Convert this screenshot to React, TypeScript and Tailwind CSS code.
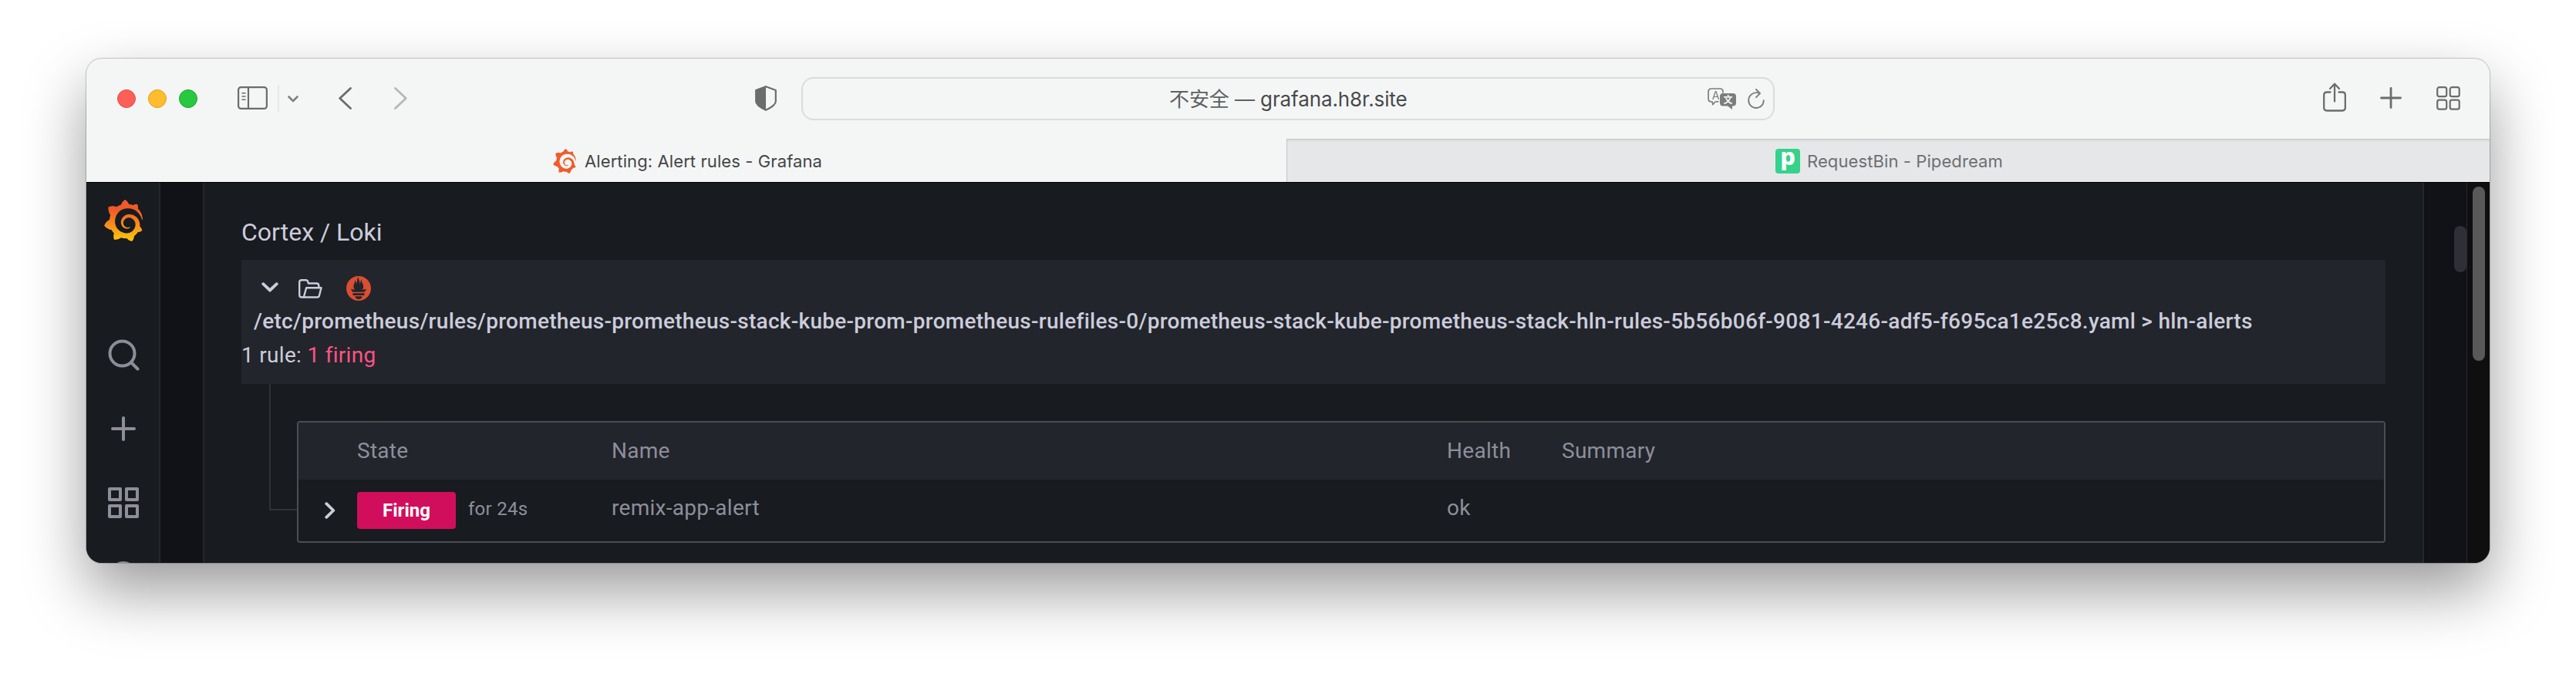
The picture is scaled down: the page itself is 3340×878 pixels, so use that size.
import React from "react";
import { SiGrafana, SiPrometheus } from "react-icons/si";

function Toolbar() {
  return (
    <div className="flex h-[104px] shrink-0 items-center text-[#6b6c6c]">
      <div className="ml-[40px] flex gap-4">
        <div className="size-6 rounded-full border border-[#e24b41] bg-[#ff5f57]" />
        <div className="size-6 rounded-full border border-[#e1a116] bg-[#febc2e]" />
        <div className="size-6 rounded-full border border-[#12ac28] bg-[#28c840]" />
      </div>
      <svg className="ml-[52px] h-[30px] w-[39px] -translate-y-px" viewBox="0 0 39 30" fill="none" stroke="currentColor" strokeWidth="2.2" strokeLinecap="round">
        <rect x="1.1" y="1.1" width="36.800" height="27.800" rx="3.500" />
        <path d="M14 1v28" />
        <path d="M6 8.700h4M6 13h4M6 17.300h4" strokeWidth="1.600" />
      </svg>
      <div className="ml-[13px] h-9 w-[2px] bg-[#e6e7e7]" />
      <svg className="ml-[11px] h-[9px] w-[14px]" viewBox="0 0 14 9" fill="none" stroke="#7f8085" strokeWidth="2.600" strokeLinecap="round" strokeLinejoin="round">
        <path d="M1.500 1.500 7 7l5.500-5.500" />
      </svg>
      <svg className="ml-[52px] h-[29px] w-[17px] -translate-y-px" viewBox="0 0 17 29" fill="none" stroke="currentColor" strokeWidth="2.800" strokeLinecap="round" strokeLinejoin="round">
        <path d="M15.500 1.500 1.700 14.500l13.800 13" />
      </svg>
      <svg className="ml-[55px] h-[29px] w-[17px] -translate-y-px" viewBox="0 0 17 29" fill="none" stroke="#b6b7b7" strokeWidth="2.800" strokeLinecap="round" strokeLinejoin="round">
        <path d="M1.500 1.500 15.300 14.500 1.500 27.500" />
      </svg>
      <svg className="ml-[451px] h-[33px] w-[28px] -translate-y-px" viewBox="0 0 28 33" fill="none">
        <path d="M14 1.200 26.800 6v14.500c0 3.200-5.300 7.700-12.800 11.200C6.500 28.200 1.200 23.700 1.200 20.500V6z" stroke="currentColor" strokeWidth="2.200" strokeLinejoin="round" />
        <path d="M14 1.200v30.500C6.500 28.200 1.200 23.700 1.200 20.500V6z" fill="currentColor" />
      </svg>
      <div className="ml-[32px] flex h-14 w-[1262px] items-center rounded-2xl border-2 border-[#dadbdb] pr-[11px]">
        <div className="ml-[475px] flex-1 pt-[2px] font-['Inter','Noto_Sans_CJK_SC',sans-serif] text-[26px] leading-8 tracking-[-0.1px] whitespace-nowrap text-[#484949]">
          <span className="text-[#5f6060]">不安全 — </span>
          <span>grafana.h8r.site</span>
        </div>
        <svg className="h-[28px] w-[38px]" viewBox="0 0 38 28" fill="none">
          <path d="M14.500 17.700 10 18l-3.300 3.700L6.200 18H5c-2.600 0-4-1.400-4-4V5c0-2.600 1.400-4 4-4h11c2.600 0 4 1.400 4 4v1.500" stroke="#7b7c7c" strokeWidth="1.700" strokeLinejoin="round" />
          <text x="10.500" y="14.500" textAnchor="middle" fontFamily="Inter" fontSize="14" fill="#7b7c7c">A</text>
          <path d="M20 7h13c2.600 0 4 1.400 4 4v8.500c0 2.600-1.400 4-4 4h-1V28l-6-4.500h-6c-2.600 0-4-1.400-4-4V11c0-2.600 1.400-4 4-4z" fill="#7b7c7c" />
          <text x="26.500" y="19.500" textAnchor="middle" fontFamily="Noto Sans CJK SC" fontWeight="700" fontSize="12" fill="#f4f6f6">文</text>
        </svg>
        <svg className="ml-[14px] h-[26px] w-[22px]" viewBox="0 0 22 26" fill="none" stroke="#7b7c7c" strokeWidth="1.900" strokeLinecap="round" strokeLinejoin="round">
          <path d="M15.500 5.900C9 3.500 1.200 7.500 1.200 15.200a9.700 9.700 0 0 0 19.600 0" />
          <path d="M11 1l5 5.200-5 5" />
        </svg>
      </div>
      <svg className="ml-auto h-[38px] w-[30px] -translate-y-[2px]" viewBox="0 0 30 38" fill="none" stroke="currentColor" strokeWidth="2.300" strokeLinecap="round" strokeLinejoin="round">
        <path d="M9.500 12.500H5c-2.500 0-3.800 1.400-3.800 3.900v16.200c0 2.500 1.300 3.900 3.800 3.900h20c2.500 0 3.800-1.400 3.800-3.900V16.400c0-2.500-1.300-3.900-3.800-3.900h-4.500" />
        <path d="M15 24.500V2M9 8l6-6.300L21 8" />
      </svg>
      <svg className="ml-[44px] size-[28px] -translate-y-px" viewBox="0 0 28 28" stroke="currentColor" strokeWidth="2.800" strokeLinecap="round">
        <path d="M14 1.500v25M1.500 14h25" />
      </svg>
      <svg className="mr-[38px] ml-[45px] h-[31px] w-[31px] -translate-y-px" viewBox="0 0 31 31" fill="none" stroke="currentColor" strokeWidth="2.200">
        <rect x="1.200" y="1.200" width="12" height="12" rx="2.500" />
        <rect x="17.700" y="1.200" width="12" height="12" rx="2.500" />
        <rect x="1.200" y="17.700" width="12" height="12" rx="2.500" />
        <rect x="17.700" y="17.700" width="12" height="12" rx="2.500" />
      </svg>
    </div>
  );
}

function TabBar() {
  return (
    <div className="flex h-14 shrink-0 font-['Inter',sans-serif] text-[22px]">
      <div className="flex w-[1556px] items-center pt-[2px] pl-[604px] text-[#454646]">
        <SiGrafana className="size-8 text-[#f15b2a]" />
        <span className="ml-[10px] tracking-[0.1px] whitespace-nowrap">Alerting: Alert rules - Grafana</span>
      </div>
      <div className="flex flex-1 items-center border-t border-l border-[#c4c5c6] bg-[#e6e7e9] pt-px pl-[633px] text-[#6e6f71] shadow-[inset_0_3px_3px_-1px_rgba(0,0,0,0.06)]">
        <span className="flex size-8 items-center justify-center rounded-[4px] bg-[#34d28b] pb-[13px] font-['Noto_Sans',sans-serif] text-[31px] leading-none font-extrabold text-white">p</span>
        <span className="ml-[9px] tracking-[0.1px] whitespace-nowrap">RequestBin - Pipedream</span>
      </div>
    </div>
  );
}

function Sidebar() {
  return (
    <div className="flex w-[96px] shrink-0 flex-col items-center border-r-2 border-[#25272c] bg-[#181b1f] pl-[2px] text-[#8e8e9b]">
      <svg className="h-0 w-0 shrink-0">
        <defs>
          <linearGradient id="brand" x1="0" y1="1" x2="0" y2="0">
            <stop offset="0.050" stopColor="#fcc10f" />
            <stop offset="0.750" stopColor="#f05a28" />
          </linearGradient>
        </defs>
      </svg>
      <SiGrafana className="mt-[22px] size-[54px] shrink-0 [&_path]:fill-[url(#brand)]" />
      <svg className="mt-[127px] size-[41px] shrink-0" viewBox="0 0 41 41" fill="none" stroke="currentColor" strokeWidth="4" strokeLinecap="round">
        <circle cx="18.500" cy="18.500" r="16" />
        <path d="M30.500 30.500l8 8" />
      </svg>
      <svg className="mt-[59px] size-[32px] shrink-0" viewBox="0 0 32 32" stroke="currentColor" strokeWidth="4" strokeLinecap="round">
        <path d="M16 2v28M2 16h28" />
      </svg>
      <svg className="mt-[60px] size-[40px] shrink-0" viewBox="0 0 40 40" fill="none" stroke="currentColor" strokeWidth="4" strokeLinejoin="round">
        <rect x="2" y="2" width="14" height="14" />
        <rect x="24" y="2" width="14" height="14" />
        <rect x="2" y="24" width="14" height="14" />
        <rect x="24" y="24" width="14" height="14" />
      </svg>
      <svg className="mt-[56px] h-[40px] w-[36px] shrink-0" viewBox="0 0 36 40" fill="none" stroke="currentColor" strokeWidth="4">
        <circle cx="18" cy="18" r="16" />
      </svg>
    </div>
  );
}

function RuleGroup() {
  return (
    <div className="h-[161px] bg-[#22252b]">
      <div className="flex h-[58px] items-center pt-[16px]">
        <svg className="ml-[26px] h-[13px] w-[22px] -translate-y-[2px]" viewBox="0 0 22 13" fill="none" stroke="#ccccdc" strokeWidth="3.800" strokeLinecap="round" strokeLinejoin="round">
          <path d="M2.200 2.200 11 10.500l8.800-8.300" />
        </svg>
        <svg className="ml-[26px] h-[25px] w-[31px]" viewBox="0 0 31 25" fill="none" stroke="#ccccdc" strokeWidth="2.400" strokeLinejoin="round">
          <path d="M7 23.500H4.200c-1.900 0-3-1.100-3-3V4.200c0-1.900 1.100-3 3-3h5.300c1.300 0 2.300.7 2.700 2l.6 2.300h10.500c1.800 0 3 1.100 3 3v2.800" />
          <path d="M10.200 11.300h19.300l-2.600 10.200c-.3 1.300-1.200 2-2.600 2H6.800z" />
        </svg>
        <SiPrometheus className="ml-[31px] size-8 text-[#da4e31]" />
      </div>
      <div className="pl-[16px] text-[28px] leading-[44px] font-medium tracking-[0.28px] whitespace-nowrap">
        /etc/prometheus/rules/prometheus-prometheus-stack-kube-prom-prometheus-rulefiles-0/prometheus-stack-kube-prometheus-stack-hln-rules-5b56b06f-9081-4246-adf5-f695ca1e25c8.yaml &gt; hln-alerts
      </div>
      <div className="text-[28px] leading-[44px] tracking-[0.3px]">
        1 rule: <span className="text-[#ff5286]">1 firing</span>
      </div>
    </div>
  );
}

const COLS = "grid grid-cols-[76px_330px_1083px_149px_1fr] items-center";

function RulesTable() {
  return (
    <div className="flex h-[206px] pl-[36px]">
      <div className="h-[164px] w-[36px] shrink-0 border-b-2 border-l-2 border-[#2f3237]" />
      <div className="mt-[48px] h-[158px] flex-1 overflow-hidden rounded-[4px] border-2 border-[#4b4d53] text-[28px] tracking-[0.28px] text-[#8e8e9b]">
        <div className={`${COLS} h-[74px] bg-[#22252b]`}>
          <span />
          <span>State</span>
          <span>Name</span>
          <span>Health</span>
          <span>Summary</span>
        </div>
        <div className={`${COLS} h-[80px]`}>
          <svg className="ml-[34px] h-[22px] w-[14px]" viewBox="0 0 14 22" fill="none" stroke="#ccccdc" strokeWidth="3.800" strokeLinecap="round" strokeLinejoin="round">
            <path d="M2.200 2.200 11.300 11l-9.100 8.800" />
          </svg>
          <div className="flex items-center">
            <span className="flex h-12 w-[128px] items-center justify-center rounded-[4px] bg-[#d10e5c] text-[24px] font-bold tracking-normal text-white">Firing</span>
            <span className="ml-4 -translate-y-[2px] text-[24px]">for 24s</span>
          </div>
          <span className="-translate-y-[3px]">remix-app-alert</span>
          <span className="-translate-y-[3px]">ok</span>
          <span />
        </div>
      </div>
    </div>
  );
}

function Page() {
  return (
    <div className="flex flex-1 overflow-hidden border-t border-black bg-[#111217] font-['Roboto',sans-serif] text-[#ccccdc]">
      <Sidebar />
      <main className="ml-[55px] w-[2880px] shrink-0 border-x-2 border-[#25272c] bg-[#181b1f] px-12 pt-[38px]">
        <h1 className="mb-[14px] h-[48px] text-[32px] leading-[52px]">Cortex / Loki</h1>
        <RuleGroup />
        <RulesTable />
      </main>
      <div className="flex flex-1 items-start justify-end pt-[56px]">
        <div className="h-[60px] w-4 rounded-full bg-[#2f3037]" />
      </div>
      <div className="w-[30px] shrink-0 border-l border-[#2b2b2d] bg-[#0f0f0f] pt-[5px] pl-[7px]">
        <div className="h-[226px] w-4 rounded-full bg-[#595959]" />
      </div>
    </div>
  );
}

export default function App() {
  return (
    <div className="h-[878px] w-[3340px] overflow-hidden bg-white pt-[76px] pl-[112px]">
      <div className="flex h-[654px] w-[3116px] flex-col overflow-hidden rounded-[20px] bg-[#f4f6f6] shadow-[0_0_0_1px_rgba(0,0,0,0.2),0_36px_80px_rgba(0,0,0,0.4)]">
        <Toolbar />
        <TabBar />
        <Page />
      </div>
    </div>
  );
}
